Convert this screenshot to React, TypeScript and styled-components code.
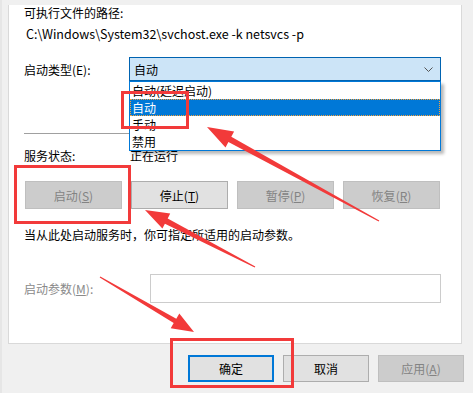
import React from 'react'
import styled, { createGlobalStyle } from 'styled-components'

const GlobalStyle = createGlobalStyle`
    html, body {
        margin: 0;
        padding: 0;
        background: #f0f0f0;
    }
    body {
        font-family: "Microsoft YaHei UI", "Noto Sans CJK SC", sans-serif;
        font-size: 12px;
        color: #000;
    }
`

const FONT = '"Microsoft YaHei UI", "Noto Sans CJK SC", sans-serif'

type Pt = [number, number]

// tapered annotation arrow: thin tail, wider shaft, triangle head
const arrowPoints = (tail: Pt, tip: Pt, headLen = 24, headW = 17, shaftW = 6) => {
    const dx = tip[0] - tail[0]
    const dy = tip[1] - tail[1]
    const len = Math.hypot(dx, dy)
    const ux = dx / len
    const uy = dy / len
    const nx = -uy
    const ny = ux
    const bx = tip[0] - ux * headLen
    const by = tip[1] - uy * headLen
    const pts: Pt[] = [
        [tail[0] + nx * 0.6, tail[1] + ny * 0.6],
        [bx + nx * shaftW / 2, by + ny * shaftW / 2],
        [bx + nx * headW / 2, by + ny * headW / 2],
        tip,
        [bx - nx * headW / 2, by - ny * headW / 2],
        [bx - nx * shaftW / 2, by - ny * shaftW / 2],
        [tail[0] - nx * 0.6, tail[1] - ny * 0.6],
    ]
    return pts.map(p => p.map(v => v.toFixed(1)).join(',')).join(' ')
}

const Key: React.FC<{ k: string }> = ({ k }) => <>(<u>{k}</u>)</>

const App: React.FC = () => {
    return (
        <>
            <GlobalStyle />
            <Window>
                <Panel>
                    <Line $top={5}>可执行文件的路径:</Line>
                    <PathLine>C:\Windows\System32\svchost.exe -k netsvcs -p</PathLine>

                    <TypeRow>
                        <FieldLabel $width={105}>启动类型(E):</FieldLabel>
                        <Combo>
                            <span>自动</span>
                            <Chevron width="9" height="5" viewBox="0 0 9 5">
                                <polyline points="0.5,0.5 4.5,4.5 8.5,0.5" fill="none" stroke="#555" strokeWidth="1" />
                            </Chevron>
                            <DropList>
                                <DropItem>自动(延迟启动)</DropItem>
                                <DropItem $selected>自动</DropItem>
                                <DropItem>手动</DropItem>
                                <DropItem>禁用</DropItem>
                            </DropList>
                        </Combo>
                    </TypeRow>

                    <Separator />

                    <StatusRow>
                        <FieldLabel $width={106}>服务状态:</FieldLabel>
                        <span>正在运行</span>
                    </StatusRow>

                    <ButtonRow>
                        <ServiceButton disabled>启动<Key k="S" /></ServiceButton>
                        <ServiceButton>停止<Key k="T" /></ServiceButton>
                        <ServiceButton disabled>暂停<Key k="P" /></ServiceButton>
                        <ServiceButton disabled>恢复<Key k="R" /></ServiceButton>
                    </ButtonRow>

                    <Line $top={18}>当从此处启动服务时，你可指定所适用的启动参数。</Line>

                    <ParamRow>
                        <FieldLabel $width={126} $disabled>启动参数<Key k="M" />:</FieldLabel>
                        <ParamInput disabled />
                    </ParamRow>
                </Panel>

                <Footer>
                    <DialogButton $primary>确定</DialogButton>
                    <DialogButton>取消</DialogButton>
                    <DialogButton disabled>应用<Key k="A" /></DialogButton>
                </Footer>
                <TaskEdge />

                <Marks width="473" height="393" viewBox="0 0 473 393">
                    <g fill="none" stroke="#f23a3a" strokeWidth="3">
                        <rect x="120.5" y="92.5" width="65" height="35" />
                        <rect x="13.5" y="166.5" width="114" height="56" />
                        <rect x="169.5" y="339.5" width="121" height="47" />
                    </g>
                    <g fill="#f23a3a">
                        <polygon points={arrowPoints([377, 221], [205, 127], 26, 18, 6)} />
                        <polygon points={arrowPoints([253, 267], [143, 210], 24, 17, 6)} />
                        <polygon points={arrowPoints([98, 277], [192, 332], 22, 17, 5)} />
                    </g>
                </Marks>
            </Window>
        </>
    )
}

const Window = styled.div`
    position: relative;
    width: 473px;
    height: 393px;
    overflow: hidden;
    background: #f0f0f0;
    font-family: ${FONT};
    font-size: 12px;
    border-left: 2px solid #e6e6e6;
    box-sizing: border-box;
`

const Panel = styled.div`
    margin-left: 6px;
    width: 454px;
    height: 339px;
    box-sizing: border-box;
    background: #fff;
    border: 1px solid #d9d9d9;
    border-top: none;
    padding: 0 20px 0 15px;
`

const Line = styled.div<{ $top: number }>`
    margin-top: ${p => p.$top}px;
    line-height: 16px;
    height: 16px;
    white-space: nowrap;
`

const PathLine = styled.div`
    margin-top: 5px;
    margin-left: 2px;
    line-height: 16px;
    height: 16px;
    white-space: nowrap;
    font-size: 12.5px;
`

const FieldLabel = styled.div<{ $width: number; $disabled?: boolean }>`
    width: ${p => p.$width}px;
    flex: none;
    white-space: nowrap;
    color: ${p => (p.$disabled ? '#8a8a8a' : '#000')};
`

const TypeRow = styled.div`
    margin-top: 15px;
    display: flex;
    align-items: center;
    height: 24px;
`

const Combo = styled.div`
    position: relative;
    width: 312px;
    height: 24px;
    box-sizing: border-box;
    border: 1px solid #0063b1;
    background: #cce4f7;
    display: flex;
    align-items: center;
    padding-left: 4px;
`

const Chevron = styled.svg`
    position: absolute;
    right: 7px;
    top: 9px;
`

const DropList = styled.div`
    position: absolute;
    left: -1px;
    top: 23px;
    width: 312px;
    box-sizing: border-box;
    border: 1px solid #0078d7;
    background: #fff;
    box-shadow: 3px 3px 3px rgba(0, 0, 0, 0.28);
    z-index: 2;
`

const DropItem = styled.div<{ $selected?: boolean }>`
    height: 17px;
    line-height: 17px;
    padding-left: 2px;
    box-sizing: border-box;
    background: ${p => (p.$selected ? '#0078d7' : '#fff')};
    color: ${p => (p.$selected ? '#fff' : '#000')};
    outline: ${p => (p.$selected ? '1px dotted #f7a23b' : 'none')};
    outline-offset: -1px;
`

const Separator = styled.div`
    margin-top: 52px;
    height: 1px;
    background: #a0a0a0;
`

const StatusRow = styled.div`
    margin-top: 14px;
    display: flex;
    line-height: 16px;
    height: 16px;
`

const ButtonRow = styled.div`
    margin-top: 17px;
    margin-left: 1px;
    width: 415px;
    display: flex;
    justify-content: space-between;
`

const BaseButton = styled.button`
    font-family: ${FONT};
    font-size: 12px;
    padding: 0;
    box-sizing: border-box;
    background: #e1e1e1;
    border: 1px solid #adadad;
    color: #000;

    &:disabled {
        background: #cccccc;
        border-color: #bfbfbf;
        color: #838383;
    }
`

const ServiceButton = styled(BaseButton)`
    width: 97px;
    height: 28px;
`

const ParamRow = styled.div`
    margin-top: 31px;
    display: flex;
    align-items: center;
`

const ParamInput = styled.input`
    width: 291px;
    height: 29px;
    box-sizing: border-box;
    border: 1px solid #cccccc;
    background: #fff;
`

const Footer = styled.div`
    margin-top: 11px;
    display: flex;
    justify-content: flex-end;
    gap: 9px;
    padding-right: 9px;
`

const DialogButton = styled(BaseButton)<{ $primary?: boolean }>`
    width: 86px;
    height: 27px;
    border: ${p => (p.$primary ? '2px solid #0078d7' : '1px solid #adadad')};
`

const TaskEdge = styled.div`
    margin-top: 11px;
    height: 1px;
    width: 462px;
    background: #5a5a5a;
`

const Marks = styled.svg`
    position: absolute;
    left: 0;
    top: 0;
    pointer-events: none;
    z-index: 5;
`

export default App
